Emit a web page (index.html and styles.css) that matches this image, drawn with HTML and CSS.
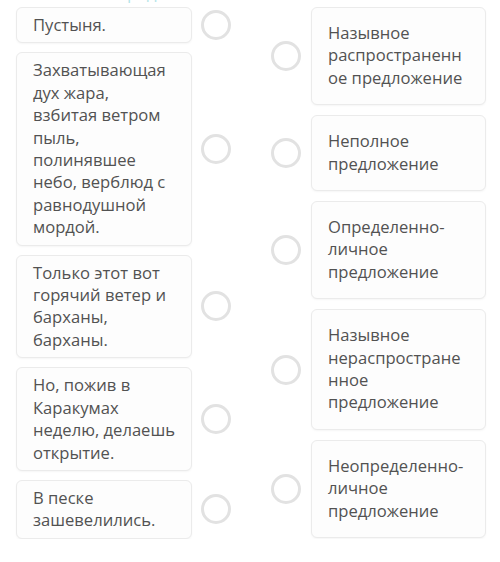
FILE: index.html
```html
<!DOCTYPE html>
<html lang="ru">
<head>
  <meta charset="UTF-8" />
  <meta name="viewport" content="width=device-width, initial-scale=1.0">
  <title>Соотнесите</title>
  <link rel="stylesheet" href="styles.css">
</head>
<body>

  <div class="task">
    <div class="task-title">Соотнесите предложения</div>

    <div class="match">
      <!-- left column: sentences -->
      <div class="column">
        <div class="row">
          <div class="card card-left">Пустыня.</div>
          <span class="dot"></span>
        </div>
        <div class="row">
          <div class="card card-left">Захватывающая дух жара, взбитая ветром пыль, полинявшее небо, верблюд с равнодушной мордой.</div>
          <span class="dot"></span>
        </div>
        <div class="row">
          <div class="card card-left">Только этот вот горячий ветер и барханы, барханы.</div>
          <span class="dot"></span>
        </div>
        <div class="row">
          <div class="card card-left">Но, пожив в Каракумах неделю, делаешь открытие.</div>
          <span class="dot"></span>
        </div>
        <div class="row">
          <div class="card card-left">В песке зашевелились.</div>
          <span class="dot"></span>
        </div>
      </div>

      <!-- right column: sentence types -->
      <div class="column column-right">
        <div class="row">
          <span class="dot"></span>
          <div class="card card-right">Назывное распространенное предложение</div>
        </div>
        <div class="row">
          <span class="dot"></span>
          <div class="card card-right">Неполное предложение</div>
        </div>
        <div class="row">
          <span class="dot"></span>
          <div class="card card-right">Определенно-личное предложение</div>
        </div>
        <div class="row">
          <span class="dot"></span>
          <div class="card card-right">Назывное нераспространенное предложение</div>
        </div>
        <div class="row">
          <span class="dot"></span>
          <div class="card card-right">Неопределенно-личное предложение</div>
        </div>
      </div>
    </div>
  </div>

</body>
</html>
```

FILE: styles.css
```css
body {
  margin: 0;
  font-family: "Open Sans", "Noto Sans", sans-serif;
  background: #fff;
  color: #525252;
}

.task {
  padding: 0 14px 0 16px;
  overflow: hidden;
}

.task-title {
  margin-top: -18px;
  margin-bottom: 7px;
  height: 18px;
  font-size: 17px;
  line-height: 22px;
  color: #2bb3c0;
  opacity: 0.35;
}

.match {
  display: flex;
  gap: 40px;
}

.column {
  display: flex;
  flex-direction: column;
  gap: 9px;
}

.column-right {
  gap: 10px;
}

.row {
  display: flex;
  align-items: center;
  gap: 9px;
}

.column-right .row {
  gap: 10px;
}

.card {
  width: 176px;
  box-sizing: border-box;
  background: #fdfdfd;
  border: 1px solid #ebebeb;
  border-radius: 6px;
  box-shadow: 0 1px 2px rgba(0,0,0,0.04);
  font-size: 16.6px;
  line-height: 22.4px;
  overflow-wrap: break-word;
}

.card-left {
  padding: 6px 15px 6px 16px;
}

.card-right {
  width: 175px;
  padding: 14px 15px 15px 16px;
}

.dot {
  flex: none;
  width: 30px;
  height: 30px;
  box-sizing: border-box;
  border: 3px solid #e2e2e2;
  border-radius: 50%;
  background: #fff;
}
```
